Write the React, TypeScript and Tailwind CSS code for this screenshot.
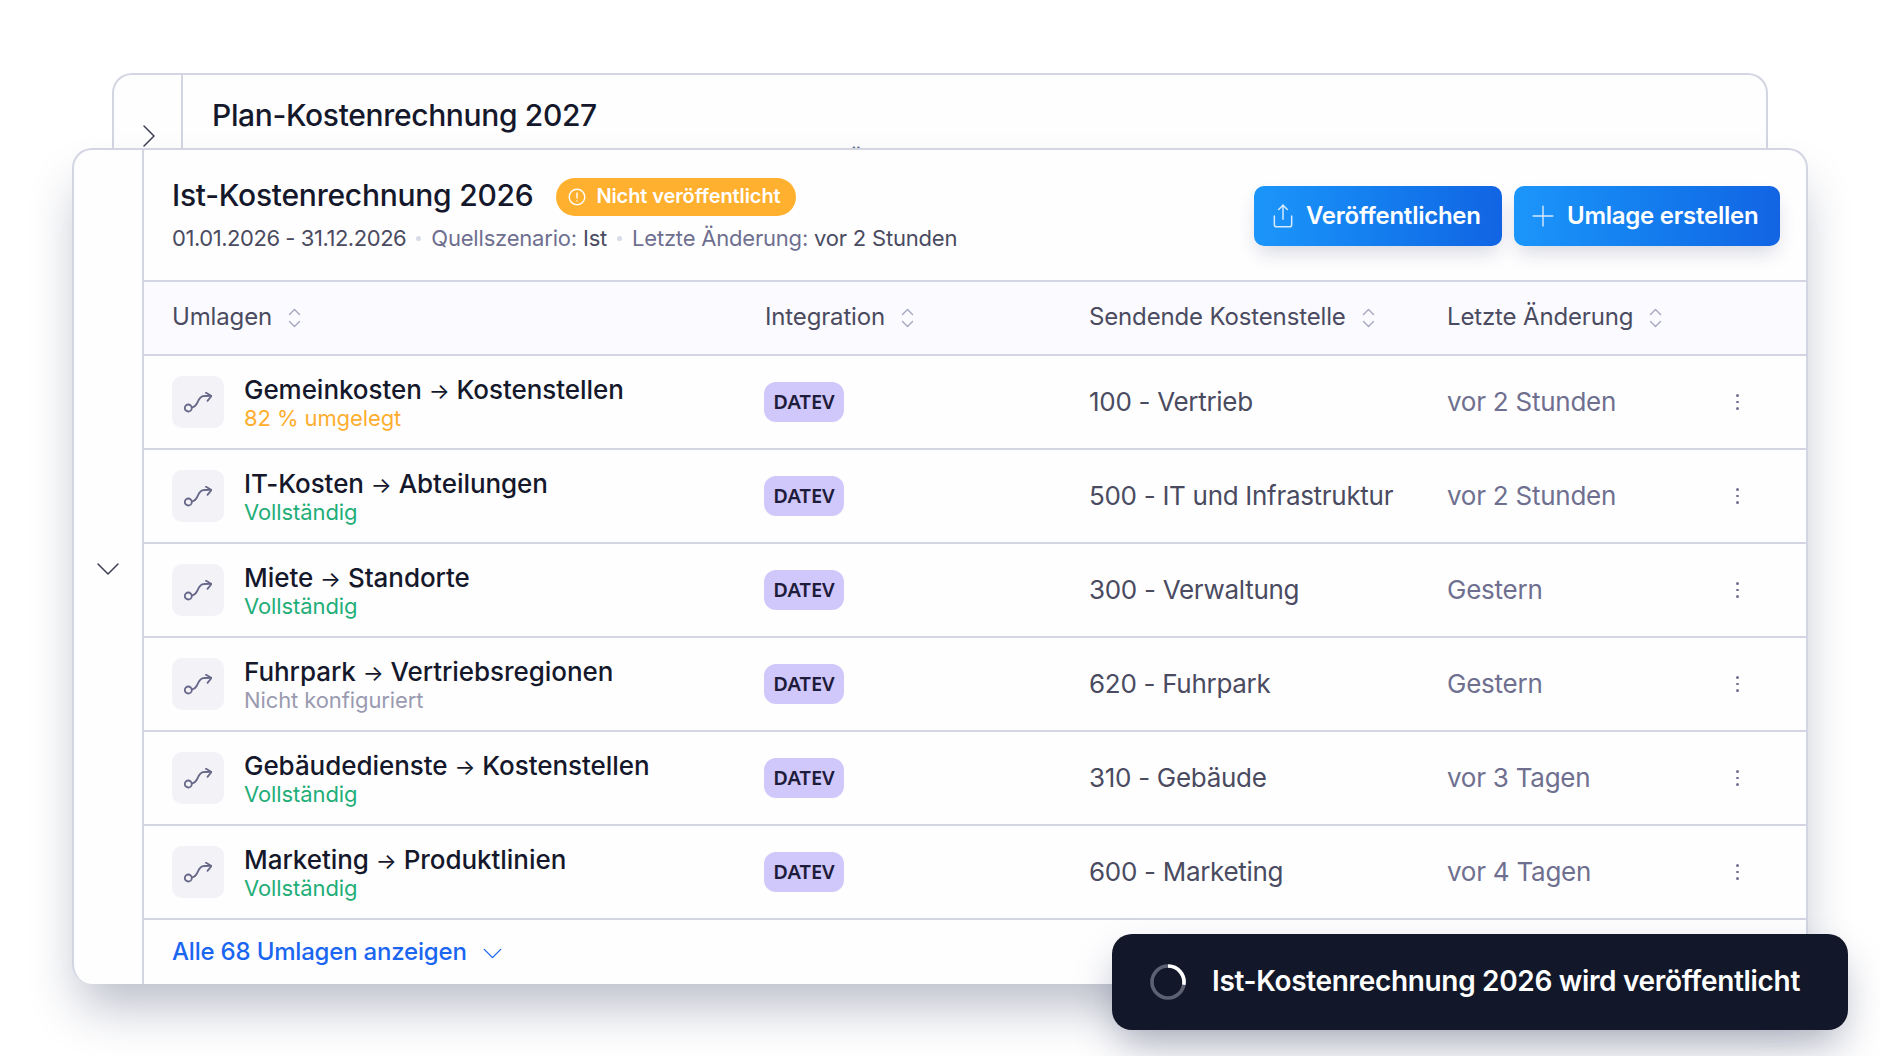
import { ChevronDown, ChevronRight, Plus, Share } from 'lucide-react'

const rows = [
  { from: 'Gemeinkosten', to: 'Kostenstellen', status: '82 % umgelegt', tone: 'text-[#ffae2e]', sender: '100 - Vertrieb', changed: 'vor 2 Stunden' },
  { from: 'IT-Kosten', to: 'Abteilungen', status: 'Vollständig', tone: 'text-[#1fae78]', sender: '500 - IT und Infrastruktur', changed: 'vor 2 Stunden' },
  { from: 'Miete', to: 'Standorte', status: 'Vollständig', tone: 'text-[#1fae78]', sender: '300 - Verwaltung', changed: 'Gestern' },
  { from: 'Fuhrpark', to: 'Vertriebsregionen', status: 'Nicht konfiguriert', tone: 'text-[#9a9ab0]', sender: '620 - Fuhrpark', changed: 'Gestern' },
  { from: 'Gebäudedienste', to: 'Kostenstellen', status: 'Vollständig', tone: 'text-[#1fae78]', sender: '310 - Gebäude', changed: 'vor 3 Tagen' },
  { from: 'Marketing', to: 'Produktlinien', status: 'Vollständig', tone: 'text-[#1fae78]', sender: '600 - Marketing', changed: 'vor 4 Tagen' },
]

function SortIcon() {
  return (
    <svg className="ml-[16px] mt-[2px] shrink-0" width="13" height="20" viewBox="0 0 13 20" fill="none" stroke="#a5a7c0" strokeWidth="1.4" strokeLinecap="round" strokeLinejoin="round">
      <path d="M1.5 6.5 6.500 1.500l5 5" />
      <path d="M1.500 13.500l5 5 5-5" />
    </svg>
  )
}

function RouteIcon() {
  return (
    <svg width="28" height="21" viewBox="0 0 28 21" fill="none" stroke="#67678a" strokeWidth="1.8" strokeLinecap="round" strokeLinejoin="round">
      <circle cx="4.300" cy="16" r="3.500" />
      <path d="M8 15.300C11 15 12.500 12.500 13.700 10 15 7 17 4 20 4L27 3.800" />
      <path d="M22 .8 27.500 4l-4 4.800" />
    </svg>
  )
}

function Dot() {
  return <span className="mx-[10px] mb-[3px] inline-block h-[5px] w-[5px] rounded-full bg-[#d9dbe6] align-middle" />
}

function Row({ from, to, status, tone, sender, changed }: (typeof rows)[number]) {
  return (
    <div className="flex h-[94px] items-center border-b-2 border-[#d3d5e3] pl-[28px]">
      <div className="flex h-[52px] w-[52px] shrink-0 items-center justify-center rounded-[10px] bg-[#f2f2f7]">
        <RouteIcon />
      </div>
      <div className="ml-[20px] mt-[1px] w-[520px] shrink-0">
        <p className="text-[26px] leading-[30px] font-medium tracking-[-0.05px] text-[#15182b]">
          {from} <span className="text-[22px] leading-[22px] font-normal">→</span> {to}
        </p>
        <p className={`text-[22px] leading-[26px] tracking-[-0.1px] ${tone}`}>{status}</p>
      </div>
      <div className="w-[325px] shrink-0">
        <span className="flex h-[40px] w-[80px] items-center justify-center rounded-[12px] bg-[#d0c8fb] pb-[1px] font-['Noto_Sans',sans-serif] text-[20px] font-semibold text-[#1e1c3a]">
          DATEV
        </span>
      </div>
      <div className="mb-[2px] w-[358px] shrink-0 text-[26px] tracking-[-0.3px] text-[#4a4b60]">{sender}</div>
      <div className="mb-[2px] w-[290px] shrink-0 text-[26px] tracking-[-0.25px] text-[#6f6f8f]">{changed}</div>
      <div className="-ml-[1px] flex flex-col gap-[4px]">
        <span className="h-[2.500px] w-[2.500px] rounded-full bg-[#6f6f8f]" />
        <span className="h-[2.500px] w-[2.500px] rounded-full bg-[#6f6f8f]" />
        <span className="h-[2.500px] w-[2.500px] rounded-full bg-[#6f6f8f]" />
      </div>
    </div>
  )
}

function HeaderCell({ label, width }: { label: string; width: string }) {
  return (
    <div className={`mb-[3px] flex items-center text-[24px] tracking-[-0.15px] text-[#4a4b60] ${width}`}>
      {label}
      <SortIcon />
    </div>
  )
}

export default function App() {
  return (
    <div className="relative h-[1056px] overflow-hidden bg-white pt-[73px] font-['Inter',sans-serif]">
      <div className="ml-[112px] flex h-[75px] w-[1656px] overflow-hidden rounded-t-[20px] border-x-2 border-t-2 border-[#d3d5e3] bg-[#fefeff]">
        <div className="relative w-[69px] shrink-0 border-r-2 border-[#d3d5e3] text-[#3d3f55]">
          <ChevronRight size={40} strokeWidth={0.9} className="absolute left-[15px] top-[41px]" />
        </div>
        <div className="pl-[29px] pt-[18px]">
          <p className="text-[30px] leading-[44px] font-medium tracking-[-0.35px] text-[#15182b]">Plan-Kostenrechnung 2027</p>
          <p className="mt-[9px] whitespace-nowrap text-[22px] leading-[26px] tracking-[-0.2px] text-[#6f6f8f]">
            <span className="tracking-[-0.45px]">01.01.2027 - 31.12.2027</span>
            <Dot />
            Quellszenario: Plan 2027 v2
            <Dot />
            Letzte Änderung: vor 1 Tag
          </p>
        </div>
      </div>

      <div className="relative ml-[72px] flex h-[836px] w-[1736px] rounded-[20px] border-2 border-b-0 border-[#d3d5e3] bg-[#fefeff] shadow-[0_30px_50px_-8px_rgba(25,35,75,0.3)]">
        <div className="flex w-[70px] shrink-0 items-center justify-center border-r-2 border-[#d3d5e3] text-[#3d3f55]">
          <ChevronDown size={40} strokeWidth={0.9} className="mt-[3px]" />
        </div>
        <div className="min-w-0 flex-1">
          <div className="flex h-[132px] items-center justify-between border-b-2 border-[#d3d5e3] pl-[28px] pr-[26px]">
            <div className="mb-[4px]">
              <div className="flex items-center">
                <h1 className="text-[30px] leading-[44px] font-medium tracking-[-0.25px] text-[#15182b]">Ist-Kostenrechnung 2026</h1>
                <span className="ml-[23px] mt-[3px] flex h-[38px] w-[240px] items-center gap-[10px] rounded-full bg-[#ffb02e] pb-[2px] pl-[12px] text-[20px] font-semibold tracking-[-0.1px] text-white">
                  <svg className="mt-[2px]" width="18" height="18" viewBox="0 0 18 18" fill="none" stroke="white" strokeWidth="1.4" strokeLinecap="round">
                    <circle cx="9" cy="9" r="7.800" />
                    <path d="M9 5v5" />
                    <path d="M9 12.900v.1" />
                  </svg>
                  Nicht veröffentlicht
                </span>
              </div>
              <p className="mt-[6px] text-[22px] leading-[30px] tracking-[-0.2px] text-[#6f6f8f]">
                <span className="tracking-[-0.45px] text-[#4a4b60]">01.01.2026 - 31.12.2026</span>
                <Dot />
                Quellszenario: <span className="text-[#4a4b60]">Ist</span>
                <Dot />
                Letzte Änderung: <span className="text-[#4a4b60]">vor 2 Stunden</span>
              </p>
            </div>
            <div className="mt-[2px] flex gap-[12px]">
              <button className="flex h-[60px] w-[248px] items-center gap-[10px] rounded-[10px] bg-gradient-to-r from-[#1c96fa] to-[#1264e3] pl-[16px] text-[24px] font-semibold tracking-[-0.25px] text-white shadow-[0_10px_20px_-4px_rgba(25,35,75,0.18)]">
                <Share size={26} strokeWidth={1.4} className="shrink-0 text-[#d6e9ff]" />
                Veröffentlichen
              </button>
              <button className="flex h-[60px] w-[266px] items-center gap-[7px] rounded-[10px] bg-gradient-to-r from-[#1c96fa] to-[#1264e3] pl-[12px] text-[24px] font-semibold tracking-[-0.25px] text-white shadow-[0_10px_20px_-4px_rgba(25,35,75,0.18)]">
                <Plus size={34} strokeWidth={1} className="shrink-0 text-[#d6e9ff]" />
                Umlage erstellen
              </button>
            </div>
          </div>

          <div className="flex h-[74px] items-center border-b-2 border-[#d3d5e3] bg-[#fafaff] pl-[28px]">
            <HeaderCell label="Umlagen" width="w-[593px]" />
            <HeaderCell label="Integration" width="w-[324px]" />
            <HeaderCell label="Sendende Kostenstelle" width="w-[358px]" />
            <HeaderCell label="Letzte Änderung" width="w-[290px]" />
          </div>

          {rows.map((row) => (
            <Row key={row.from} {...row} />
          ))}

          <div className="flex h-[64px] items-center pl-[28px] text-[24px] font-medium tracking-[-0.2px] text-[#1a66f0]">
            Alle 68 Umlagen anzeigen
            <ChevronDown size={33} strokeWidth={1} className="ml-[9px] mt-[3px]" />
          </div>
        </div>
      </div>

      <div className="absolute left-[1112px] top-[934px] flex h-[96px] w-[736px] items-center rounded-[20px] bg-[#121829] pl-[38px] text-[28px] font-semibold tracking-[-0.33px] text-white shadow-[0_20px_40px_-6px_rgba(25,35,75,0.35)]">
        <svg width="36" height="36" viewBox="0 0 36 36" fill="none" strokeWidth="3.600">
          <circle cx="18" cy="18" r="16" stroke="#5d6272" />
          <path d="M18 2a16 16 0 0 1 15.760 18.800" stroke="white" />
        </svg>
        <span className="mb-[2px] ml-[26px]">Ist-Kostenrechnung 2026 wird veröffentlicht</span>
      </div>
    </div>
  )
}
